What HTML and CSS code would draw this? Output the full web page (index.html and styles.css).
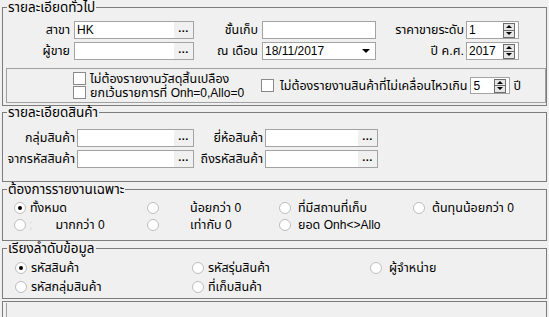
FILE: index.html
```html
<!DOCTYPE html>
<html lang="th">
<head>
<meta charset="utf-8">
<title>รายงาน</title>
<link rel="stylesheet" href="styles.css">
</head>
<body>
<div class="form">
  <fieldset class="grp g1">
    <legend>รายละเอียดทั่วไป</legend>
    <div class="rows1">
      <label class="lbl">สาขา</label>
      <div class="field"><span class="val en">HK</span><span class="dots">...</span></div>
      <label class="lbl">ชั้นเก็บ</label>
      <div class="field"><span class="val"></span></div>
      <label class="lbl lbl-c">ราคาขายระดับ</label>
      <div class="field"><span class="val en">1</span><span class="spinbtn"><i class="up"></i><i class="dn"></i></span></div>

      <label class="lbl">ผู้ขาย</label>
      <div class="field"><span class="val"></span><span class="dots">...</span></div>
      <label class="lbl">ณ เดือน</label>
      <div class="field"><span class="val en">18/11/2017</span><span class="arrow"><i></i></span></div>
      <label class="lbl lbl-c">ปี ค.ศ.</label>
      <div class="field"><span class="val en">2017</span><span class="spinbtn"><i class="up"></i><i class="dn"></i></span></div>
    </div>
    <div class="opts">
      <div class="optcol">
        <div class="chk"><span class="box"></span><span>ไม่ต้องรายงานวัสดุสิ้นเปลือง</span></div>
        <div class="chk"><span class="box"></span><span>ยกเว้นรายการที่ <span class="en">Onh=0,Allo=0</span></span></div>
      </div>
      <div class="chk chk-r">
        <span class="box"></span><span class="chk-text">ไม่ต้องรายงานสินค้าที่ไม่เคลื่อนไหวเกิน</span>
        <div class="field small"><span class="val en">5</span><span class="spinbtn"><i class="up"></i><i class="dn"></i></span></div>
        <span class="unit">ปี</span>
      </div>
    </div>
  </fieldset>

  <fieldset class="grp g2">
    <legend>รายละเอียดสินค้า</legend>
    <div class="rows2">
      <label class="lbl">กลุ่มสินค้า</label>
      <div class="field"><span class="val"></span><span class="dots">...</span></div>
      <label class="lbl">ยี่ห้อสินค้า</label>
      <div class="field"><span class="val"></span><span class="dots">...</span></div>
      <label class="lbl">จากรหัสสินค้า</label>
      <div class="field"><span class="val"></span><span class="dots">...</span></div>
      <label class="lbl">ถึงรหัสสินค้า</label>
      <div class="field"><span class="val"></span><span class="dots">...</span></div>
    </div>
  </fieldset>

  <fieldset class="grp g3">
    <legend>ต้องการรายงานเฉพาะ</legend>
    <div class="rows3">
      <div class="opt"><span class="rad on"></span><span class="t t1">ทั้งหมด</span></div>
      <div class="opt"><span class="rad"></span><span class="t t2">น้อยกว่า <span class="en">0</span></span></div>
      <div class="opt"><span class="rad"></span><span class="t t3">ที่มีสถานที่เก็บ</span></div>
      <div class="opt"><span class="rad"></span><span class="t t3">ต้นทุนน้อยกว่า <span class="en">0</span></span></div>
      <div class="opt"><span class="rad"></span><span class="faint">;</span><span class="t t5">มากกว่า <span class="en">0</span></span></div>
      <div class="opt"><span class="rad"></span><span class="t t2">เท่ากับ <span class="en">0</span></span></div>
      <div class="opt"><span class="rad"></span><span class="t t3">ยอด <span class="en">Onh&lt;&gt;Allo</span></span></div>
      <div class="opt"></div>
    </div>
  </fieldset>

  <fieldset class="grp g4">
    <legend>เรียงลำดับข้อมูล</legend>
    <div class="rows4">
      <div class="opt"><span class="rad on"></span><span class="t t1">รหัสสินค้า</span></div>
      <div class="opt"><span class="rad"></span><span class="t t1">รหัสรุ่นสินค้า</span></div>
      <div class="opt"><span class="rad"></span><span class="t t3">ผู้จำหน่าย</span></div>
      <div class="opt"><span class="rad"></span><span class="t t1">รหัสกลุ่มสินค้า</span></div>
      <div class="opt"><span class="rad"></span><span class="t t1">ที่เก็บสินค้า</span></div>
      <div class="opt"></div>
    </div>
  </fieldset>

  <div class="bottom"><div class="bottom-in"></div></div>
</div>
</body>
</html>
```

FILE: styles.css
```css
* { box-sizing: border-box; }
html, body { margin: 0; padding: 0; }
body {
  background: #f0f0f0;
  font-family: "Liberation Sans", "Noto Sans Thai", "Noto Sans", sans-serif;
  font-size: 12.5px;
  color: #000;
  width: 549px;
  height: 317px;
  overflow: hidden;
}
.en { font-size: 12px; }
.form { padding: 0 2px; }

.grp {
  margin: 0;
  padding: 0;
  border: 1px solid #7c7c7c;
  min-width: 0;
}
.grp legend {
  margin-left: 4px;
  padding: 2px 1px 0;
  line-height: 12px;
  font-size: 13.5px;
  white-space: nowrap;
}

.lbl {
  text-align: right;
  padding-right: 4px;
  line-height: 18px;
  white-space: nowrap;
}
.lbl-c { padding-right: 2px; }

.field {
  height: 18px;
  background: #fff;
  border: 1px solid #a3a3a3;
  display: flex;
  align-items: center;
}
.val {
  flex: 1;
  padding-left: 2px;
  line-height: 16px;
  white-space: nowrap;
  overflow: hidden;
}
.dots {
  width: 19px;
  height: 16px;
  background: #f0f0f0;
  text-align: center;
  font-weight: bold;
  font-size: 11px;
  line-height: 12px;
  letter-spacing: 0.5px;
}
.arrow {
  width: 17px;
  height: 16px;
  display: flex;
  align-items: center;
  justify-content: center;
}
.arrow i {
  display: block;
  width: 0; height: 0;
  border-left: 4px solid transparent;
  border-right: 4px solid transparent;
  border-top: 4px solid #000;
  margin-right: 2px;
}
.spinbtn {
  width: 12px;
  height: 15px;
  margin-right: 3px;
  border: 1px solid #6d6d6d;
  background: #e6e6e6;
  display: flex;
  flex-direction: column;
}
.spinbtn i {
  flex: 1;
  display: flex;
  align-items: center;
  justify-content: center;
}
.spinbtn i.up { border-bottom: 1px solid #6d6d6d; }
.spinbtn i::before {
  content: "";
  width: 0; height: 0;
  border-left: 3px solid transparent;
  border-right: 3px solid transparent;
}
.spinbtn i.up::before { border-bottom: 3px solid #000; }
.spinbtn i.dn::before { border-top: 3px solid #000; }

/* group 1 */
.rows1 {
  display: grid;
  grid-template-columns: 71px 120px 68px 114px 90px 53px;
  row-gap: 3px;
  padding-top: 7px;
}
.opts {
  margin: 8px 0 2px 3px;
  height: 35px;
  border: 1px solid #a0a0a0;
  display: flex;
  align-items: center;
  padding-left: 66px;
}
.optcol {
  width: 188px;
  display: flex;
  flex-direction: column;
}
.chk {
  display: flex;
  align-items: center;
  height: 14px;
  line-height: 14px;
  white-space: nowrap;
}
.box {
  width: 13px;
  height: 13px;
  border: 1px solid #8a8a8a;
  background: #fff;
  margin-right: 4px;
  flex: none;
}
.chk-r { height: 17px; }
.chk-r .box { margin-right: 6px; }
.chk-text { margin-right: 3px; }
.field.small { width: 40px; height: 17px; }
.field.small .spinbtn { height: 14px; }
.unit { margin-left: 3px; }

/* group 2 */
.g2 { margin-top: -1px; }
.rows2 {
  display: grid;
  grid-template-columns: 74px 117px 71px 113px;
  row-gap: 3px;
  padding: 10px 0 13px;
}
.rows2 .lbl { padding-right: 2px; }

/* radio groups */
.opt {
  display: flex;
  align-items: center;
  white-space: nowrap;
  line-height: 16px;
}
.rad {
  width: 12px;
  height: 12px;
  border-radius: 50%;
  border: 1px solid #bdbdbd;
  background: #fff;
  flex: none;
  display: flex;
  align-items: center;
  justify-content: center;
}
.rad.on::after {
  content: "";
  width: 4px;
  height: 4px;
  border-radius: 50%;
  background: #000;
}
.t1 { margin-left: 4px; }
.t2 { margin-left: 31px; }
.t3 { margin-left: 7px; }
.t5 { margin-left: 23px; }
.faint { color: #d6d6d6; margin-left: 3px; }

.rows3 {
  display: grid;
  grid-template-columns: 133px 132px 134px 1fr;
  grid-auto-rows: 17px;
  padding: 3px 0 7px 11px;
}
.rows4 {
  display: grid;
  grid-template-columns: 177px 178px 1fr;
  grid-auto-rows: 19px;
  padding: 3px 0 2px 12px;
}

.bottom {
  margin-top: 2px;
  height: 20px;
  border: 1px solid #7c7c7c;
  border-bottom: none;
  padding-left: 3px;
}
.bottom-in {
  height: 100%;
  border-left: 1px solid #a0a0a0;
  margin-top: 1px;
}
```
